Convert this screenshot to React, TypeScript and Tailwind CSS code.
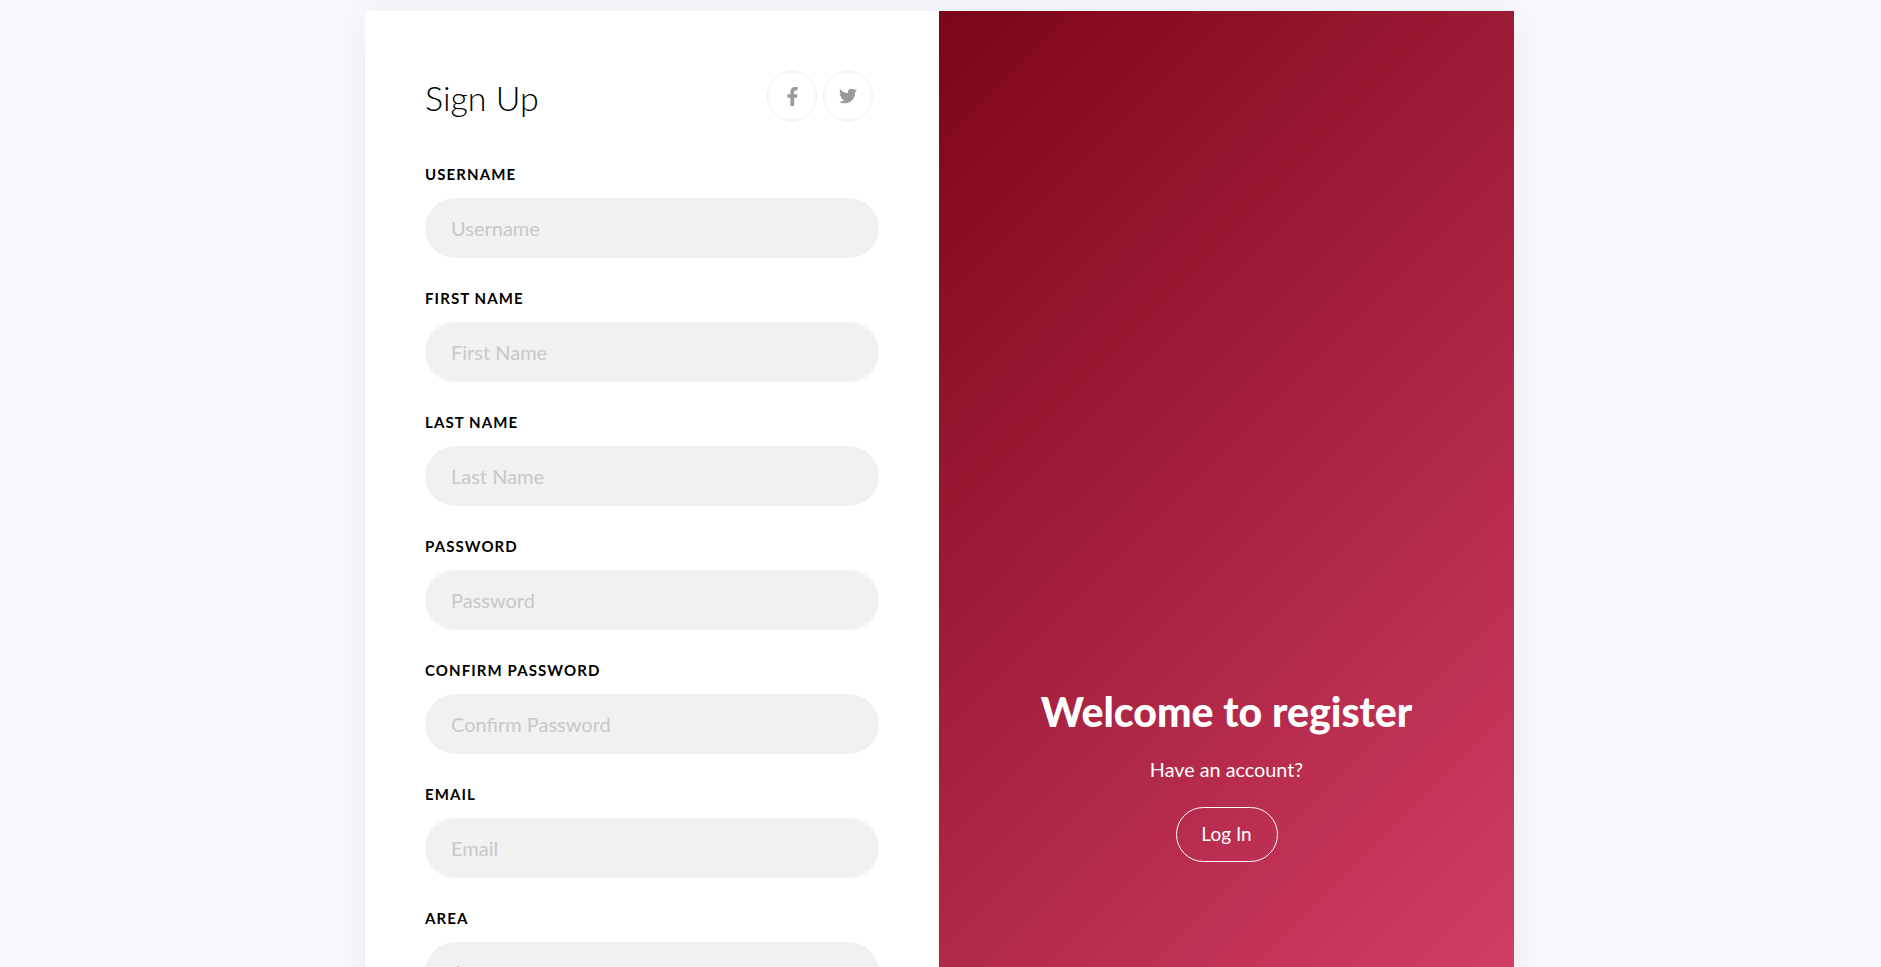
import { FaFacebookF, FaTwitter } from "react-icons/fa";

const fields = ["Username", "First Name", "Last Name", "Password", "Confirm Password", "Email", "Area"];

export default function App() {
  return (
    <div className="h-screen overflow-hidden bg-[#f8f9fd] pt-[11px] font-['Lato',sans-serif]">
      <div className="ml-[365px] flex min-h-[1528px] w-[1149px] bg-white shadow-[0_0_40px_rgba(0,0,0,0.06)]">
        <div className="w-[574px] p-[60px]">
          <div className="mb-[43px] flex h-[50px] items-start justify-between pr-[6px]">
            <h3 className="mt-[2px] text-[34px] leading-[50px] font-light text-black">Sign Up</h3>
            <div className="flex gap-[6px]">
              <a className="flex h-[50px] w-[50px] items-center justify-center rounded-full border border-[#f0f0f0] text-[#999]">
                <FaFacebookF size={19} />
              </a>
              <a className="flex h-[50px] w-[50px] items-center justify-center rounded-full border border-[#f0f0f0] text-[#999]">
                <FaTwitter size={18} />
              </a>
            </div>
          </div>
          <form className="flex flex-col gap-[30px]">
            {fields.map((f) => (
              <div key={f}>
                <label className="mb-[13px] block text-[15px] leading-[21px] font-bold tracking-[1.1px] text-black uppercase">{f}</label>
                <input
                  placeholder={f}
                  className="block h-[60px] w-full rounded-[50px] bg-[#f1f1f1] px-[26px] text-[20px] text-black outline-none placeholder:text-[#c8c8c8]"
                />
              </div>
            ))}
          </form>
        </div>
        <div className="flex w-[575px] flex-col items-center justify-center bg-[linear-gradient(135deg,#7b0519,#f25280)] text-white">
          <h2 className="text-[41px] leading-[48px] font-black">Welcome to register</h2>
          <p className="mt-[20px] text-[19.8px] leading-[27px]">Have an account?</p>
          <button className="mt-[24px] h-[55px] w-[102px] rounded-[50px] border border-white text-[19px] text-white">Log In</button>
        </div>
      </div>
    </div>
  );
}
